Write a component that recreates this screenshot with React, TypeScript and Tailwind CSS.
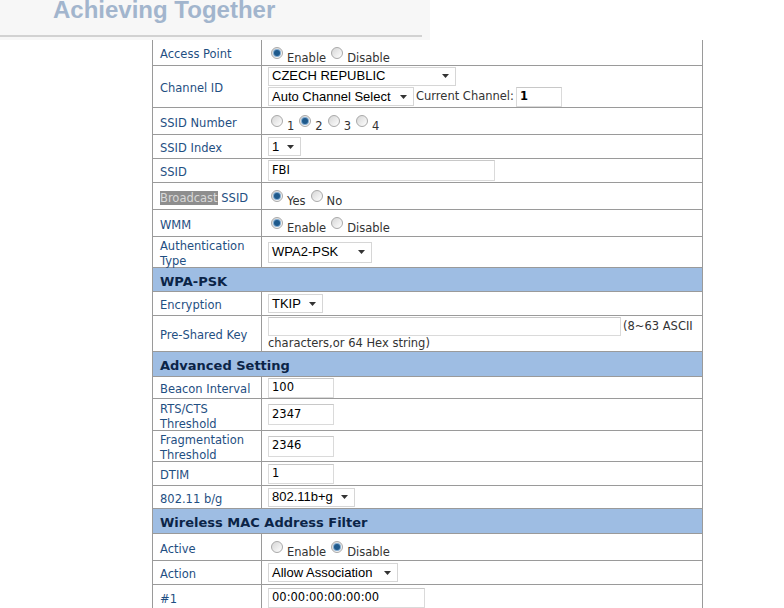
import React from 'react';

const labelFont = { fontFamily: '"DejaVu Sans", Verdana, sans-serif' };

const Radio: React.FC<{ checked?: boolean }> = ({ checked }) => (
  <span className="relative inline-block w-[12px] h-[12px] shrink-0 rounded-full border border-[#a9a9a9] bg-linear-to-br from-[#d6d6d6] to-[#ffffff]">
    {checked && (
      <span className="absolute left-[2px] top-[2px] w-[6px] h-[6px] rounded-full bg-[#1f5a8c] shadow-[0_0_0_1px_#7fa9cf]" />
    )}
  </span>
);

const RadioOption: React.FC<{ checked?: boolean; text: string }> = ({ checked, text }) => (
  <span className="inline-flex items-start ml-[3px] mr-[2px]">
    <Radio checked={checked} />
    <span className="mt-[5px] ml-[4px] text-[11.5px] leading-[13px] text-[#333]">{text}</span>
  </span>
);

const Select: React.FC<{ value: string; w: string; h?: string }> = ({ value, w, h = 'h-[19px]' }) => (
  <span
    className={`inline-flex items-center justify-between ${w} ${h} border border-[#d6d6d6] bg-white pl-[3px] pr-[6px] text-[13px] text-black`}
    style={{ fontFamily: '"Liberation Sans", Arial, sans-serif' }}
  >
    <span>{value}</span>
    <svg width="7" height="4" viewBox="0 0 7 4"><path d="M0 0 L7 0 L3.5 4 Z" fill="#333" /></svg>
  </span>
);

const TextInput: React.FC<{ value?: string; w: string; h?: string; bold?: boolean }> = ({ value = '', w, h = 'h-[20px]', bold }) => (
  <span className={`inline-flex items-center ${w} ${h} border border-[#dadada] border-t-[#c8c8c8] bg-white px-[3px] text-[11.5px] text-black ${bold ? 'font-bold' : ''}`}>
    {value}
  </span>
);

const Row: React.FC<{ label: React.ReactNode; h: string; children?: React.ReactNode; valueClass?: string }> = ({ label, h, children, valueClass = 'items-center' }) => (
  <div className={`flex ${h} border-b border-[#9a9a9a]`}>
    <div className="w-[109px] shrink-0 border-r border-[#9a9a9a] flex items-center pl-[7px] pt-[4px] text-[11.5px] leading-[15px] text-[#1f4f82]">
      {label}
    </div>
    <div className={`flex-1 flex pl-[6px] ${valueClass}`}>{children}</div>
  </div>
);

const Header: React.FC<{ title: string; h: string }> = ({ title, h }) => (
  <div className={`flex items-center ${h} bg-[#9ebde3] border-b border-[#9a9a9a] pl-[7px] pt-[4px] text-[13px] font-bold text-[#0b2447]`}>
    {title}
  </div>
);

export default function App() {
  return (
    <div className="w-[784px] h-[608px] overflow-hidden bg-white" style={labelFont}>
      <div className="w-[430px] h-[40px] bg-[#f7f7f7] overflow-hidden">
        <div
          className="pl-[53px] mt-[-3px] text-[24px] leading-[26px] font-bold text-[#a2b5cd]"
          style={{ fontFamily: '"Liberation Sans", Arial, sans-serif' }}
        >
          Achieving Together
        </div>
        <div className="mt-[12px] w-[422px] h-[2px] bg-[#d2d2d2]" />
      </div>

      <div className="ml-[152px] w-[551px] border-l border-r border-[#9a9a9a]">
        <Row label="Access Point" h="h-[26px]" valueClass="items-start pt-[7px]">
          <RadioOption checked text="Enable" />
          <RadioOption text="Disable" />
        </Row>
        <Row label="Channel ID" h="h-[42px]" valueClass="flex-col justify-center gap-[1px]">
          <Select value="CZECH REPUBLIC" w="w-[188px]" />
          <div className="flex items-center">
            <Select value="Auto Channel Select" w="w-[146px]" />
            <span className="ml-[2px] mr-[2px] text-[11.5px] text-[#333]">Current Channel:</span>
            <TextInput value="1" w="w-[46px]" bold />
          </div>
        </Row>
        <Row label="SSID Number" h="h-[27px]" valueClass="items-start pt-[7px]">
          <RadioOption text="1" />
          <RadioOption checked text="2" />
          <RadioOption text="3" />
          <RadioOption text="4" />
        </Row>
        <Row label="SSID Index" h="h-[24px]">
          <Select value="1" w="w-[33px]" />
        </Row>
        <Row label="SSID" h="h-[24px]">
          <TextInput value="FBI" w="w-[227px]" h="h-[21px]" />
        </Row>
        <Row
          label={
            <span>
              <span className="bg-[#8e8e8e] text-[#d8d8d8]">Broadcast</span> SSID
            </span>
          }
          h="h-[27px]"
          valueClass="items-start pt-[7px]"
        >
          <RadioOption checked text="Yes" />
          <RadioOption text="No" />
        </Row>
        <Row label="WMM" h="h-[27px]" valueClass="items-start pt-[7px]">
          <RadioOption checked text="Enable" />
          <RadioOption text="Disable" />
        </Row>
        <Row label={<span>Authentication<br />Type</span>} h="h-[31px]">
          <Select value="WPA2-PSK" w="w-[104px]" h="h-[21px]" />
        </Row>

        <Header title="WPA-PSK" h="h-[24px]" />
        <Row label="Encryption" h="h-[24px]">
          <Select value="TKIP" w="w-[55px]" />
        </Row>
        <Row label="Pre-Shared Key" h="h-[36px]" valueClass="flex-col justify-center">
          <div className="flex items-center">
            <TextInput w="w-[353px]" h="h-[19px]" />
            <span className="ml-[2px] text-[11.5px] text-[#333]">(8~63 ASCII</span>
          </div>
          <div className="text-[11.5px] leading-[14px] text-[#333]">characters,or 64 Hex string)</div>
        </Row>

        <Header title="Advanced Setting" h="h-[25px]" />
        <Row label="Beacon Interval" h="h-[22px]">
          <TextInput value="100" w="w-[66px]" />
        </Row>
        <Row label={<span>RTS/CTS<br />Threshold</span>} h="h-[32px]">
          <TextInput value="2347" w="w-[66px]" h="h-[21px]" />
        </Row>
        <Row label={<span>Fragmentation<br />Threshold</span>} h="h-[31px]">
          <TextInput value="2346" w="w-[66px]" h="h-[21px]" />
        </Row>
        <Row label="DTIM" h="h-[24px]">
          <TextInput value="1" w="w-[66px]" />
        </Row>
        <Row label="802.11 b/g" h="h-[23px]">
          <Select value="802.11b+g" w="w-[87px]" />
        </Row>

        <Header title="Wireless MAC Address Filter" h="h-[25px]" />
        <Row label="Active" h="h-[27px]" valueClass="items-start pt-[7px]">
          <RadioOption text="Enable" />
          <RadioOption checked text="Disable" />
        </Row>
        <Row label="Action" h="h-[24px]">
          <Select value="Allow Association" w="w-[130px]" />
        </Row>
        <Row label="#1" h="h-[26px]">
          <TextInput value="00:00:00:00:00:00" w="w-[157px]" />
        </Row>
      </div>
    </div>
  );
}
